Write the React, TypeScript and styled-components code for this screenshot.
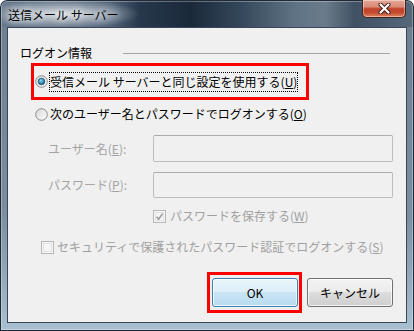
import styled, { createGlobalStyle } from "styled-components";

const GlobalStyle = createGlobalStyle`
  html, body {
    margin: 0;
    padding: 0;
    background: #fff;
  }
  body {
    font-family: "Noto Sans CJK JP", "Noto Sans", sans-serif;
    font-size: 12px;
  }
`;

const Window = styled.div`
  width: 414px;
  height: 331px;
  box-sizing: border-box;
  display: flex;
  flex-direction: column;
  border-radius: 7px 7px 0 0;
  overflow: hidden;
  background:
    radial-gradient(ellipse 78px 15px at 62px 14px, rgba(222, 227, 232, 0.95), rgba(222, 227, 232, 0)) top left / 100% 27px no-repeat,
    linear-gradient(
        to right,
        #66778a 0px,
        #53657a 110px,
        #27384c 140px,
        #1a293a 190px,
        #34475a 240px,
        #5f7385 295px,
        #6a7b8b 325px,
        #3f5163 355px,
        #56697b 414px
      )
      top left / 100% 27px no-repeat,
    linear-gradient(to bottom, #6c7d8e 0%, #7b8fa1 65%, #a9c0d2 100%);
  box-shadow:
    inset 0 0 0 1px #1f2a36,
    inset 0 0 0 2px rgba(255, 255, 255, 0.3);
`;

const TitleBar = styled.div`
  height: 27px;
  flex-shrink: 0;
  display: flex;
  align-items: flex-start;
  padding: 0 8px;
  box-sizing: border-box;
`;

const Title = styled.span`
  margin-top: 8px;
  line-height: 14px;
  color: #000;
  text-shadow: 0 0 6px #fff, 0 0 10px rgba(255, 255, 255, 0.9);
`;

const CloseButton = styled.div`
  margin-left: auto;
  width: 44px;
  height: 18px;
  box-sizing: border-box;
  border: 1px solid #47211a;
  border-top: none;
  border-radius: 0 0 5px 5px;
  background: linear-gradient(
    to bottom,
    #e5a696 0%,
    #d98a76 40%,
    #c2422b 52%,
    #c54b31 75%,
    #de8660 100%
  );
  box-shadow: inset 0 0 0 1px rgba(255, 255, 255, 0.4);
  display: flex;
  align-items: center;
  justify-content: center;
`;

const Client = styled.div`
  flex: 1;
  margin: 0 7px 8px;
  border: 1px solid #3a4653;
  background: #f0f0f0;
  display: flex;
  flex-direction: column;
  color: #000;
`;

const GroupHeader = styled.div`
  display: flex;
  align-items: center;
  height: 14px;
  margin-top: 18px;
  padding: 0 16px 0 12px;
`;

const GroupLabel = styled.span`
  line-height: 14px;
`;

const GroupLine = styled.div`
  flex: 1;
  margin-left: 31px;
  border-top: 1px solid #a6a6a6;
`;

const Highlight = styled.div`
  box-sizing: border-box;
  border: 3px solid #ff0000;
`;

const RadioHighlight = styled(Highlight)`
  width: 278px;
  height: 37px;
  margin: 3px 0 0 23px;
  padding-left: 1px;
  display: flex;
  align-items: center;
`;

const OptionRow = styled.div<{ $indent: number; $top: number; $gap: number }>`
  display: flex;
  align-items: center;
  height: 14px;
  margin: ${(p) => p.$top}px 0 0 ${(p) => p.$indent}px;
  gap: ${(p) => p.$gap}px;
`;

const OptionText = styled.span<{ $disabled?: boolean }>`
  line-height: 14px;
  white-space: nowrap;
  color: ${(p) => (p.$disabled ? "#a0a0a0" : "#000")};
`;

const FocusText = styled.span`
  margin-left: 1px;
  padding: 2px 0;
  border: 1px dotted #000;
  line-height: 14px;
  white-space: nowrap;
`;

const FieldRow = styled.div<{ $top: number }>`
  display: flex;
  align-items: center;
  margin: ${(p) => p.$top}px 0 0 40px;
`;

const FieldLabel = styled.span`
  width: 105px;
  color: #a3a3a3;
  line-height: 14px;
  white-space: nowrap;
`;

const TextBox = styled.div<{ $h: number }>`
  width: 240px;
  height: ${(p) => p.$h}px;
  box-sizing: border-box;
  border: 1px solid #bdbdbd;
  border-top-color: #acacac;
  border-radius: 2px;
  background: #f0f0f0;
`;

const ButtonRow = styled.div`
  display: flex;
  align-items: flex-start;
  margin-top: 18px;
  padding-left: 199px;
`;

const ButtonHighlight = styled(Highlight)`
  padding: 3px 1px 3px 2px;
`;

const Button = styled.button<{ $default?: boolean }>`
  width: 86px;
  height: 29px;
  padding: 0;
  box-sizing: border-box;
  border: 1px solid ${(p) => (p.$default ? "#3c7fb1" : "#707070")};
  border-radius: 3px;
  font-family: inherit;
  font-size: 12px;
  color: #000;
  background: ${(p) =>
    p.$default
      ? "linear-gradient(to bottom, #eaf5fb 0%, #dceef8 50%, #c9e5f4 50%, #b8dbee 100%)"
      : "linear-gradient(to bottom, #f2f2f2 0%, #ebebeb 50%, #dddddd 50%, #cfcfcf 100%)"};
  box-shadow: inset 0 0 0 1px rgba(255, 255, 255, 0.75);
`;

const CancelButton = styled(Button)`
  margin: 6px 0 0 5px;
`;

function Radio({ checked, disabled }: { checked?: boolean; disabled?: boolean }) {
  const ring = disabled ? "#c4c4c4" : "#8a8c8e";
  return (
    <svg width="13" height="13" viewBox="0 0 13 13">
      <defs>
        <linearGradient id="rfill" x1="0" y1="0" x2="1" y2="1">
          <stop offset="0" stopColor="#d6d6d6" />
          <stop offset="1" stopColor="#ffffff" />
        </linearGradient>
        <radialGradient id="rdot" cx="0.4" cy="0.35" r="0.7">
          <stop offset="0" stopColor="#8ad8f2" />
          <stop offset="0.6" stopColor="#2f89b4" />
          <stop offset="1" stopColor="#1a5675" />
        </radialGradient>
      </defs>
      <circle cx="6.5" cy="6.5" r="5.8" fill={disabled ? "#f4f4f4" : "url(#rfill)"} stroke={ring} />
      {disabled && <circle cx="6.5" cy="6.5" r="4" fill="none" stroke="#e0e0e0" />}
      {checked && <circle cx="6.5" cy="6.5" r="3.3" fill="url(#rdot)" stroke="#23536e" strokeWidth="0.8" />}
    </svg>
  );
}

function Check({ checked }: { checked?: boolean }) {
  return (
    <svg width="13" height="13" viewBox="0 0 13 13">
      <rect x="0.5" y="0.5" width="12" height="12" fill="#f6f6f6" stroke="#b6b6b6" />
      <rect x="2.5" y="2.5" width="8" height="8" fill="none" stroke="#e2e2e2" />
      {checked && (
        <path d="M3.5 6.8 L5.6 9.2 L9.6 3.6" fill="none" stroke="#9c9c9c" strokeWidth="1.6" />
      )}
    </svg>
  );
}

export default function App() {
  return (
    <>
      <GlobalStyle />
      <Window>
        <TitleBar>
          <Title>送信メール サーバー</Title>
          <CloseButton>
            <svg width="13" height="11" viewBox="0 0 13 11">
              <path d="M2.5 1.5 L10.5 9.5 M10.5 1.5 L2.5 9.5" stroke="#3b1a14" strokeWidth="4" strokeLinecap="round" />
              <path d="M2.5 1.5 L10.5 9.5 M10.5 1.5 L2.5 9.5" stroke="#ffffff" strokeWidth="2.2" strokeLinecap="round" />
            </svg>
          </CloseButton>
        </TitleBar>
        <Client>
          <GroupHeader>
            <GroupLabel>ログオン情報</GroupLabel>
            <GroupLine />
          </GroupHeader>
          <RadioHighlight>
            <Radio checked />
            <FocusText>
              受信メール サーバーと同じ設定を使用する(<u>U</u>)
            </FocusText>
          </RadioHighlight>
          <OptionRow $indent={27} $top={7} $gap={2}>
            <Radio />
            <OptionText>
              次のユーザー名とパスワードでログオンする(<u>O</u>)
            </OptionText>
          </OptionRow>
          <FieldRow $top={14}>
            <FieldLabel>
              ユーザー名(<u>E</u>):
            </FieldLabel>
            <TextBox $h={27} />
          </FieldRow>
          <FieldRow $top={10}>
            <FieldLabel>
              パスワード(<u>P</u>):
            </FieldLabel>
            <TextBox $h={26} />
          </FieldRow>
          <OptionRow $indent={145} $top={11} $gap={4}>
            <Check checked />
            <OptionText $disabled>
              パスワードを保存する(<u>W</u>)
            </OptionText>
          </OptionRow>
          <OptionRow $indent={33} $top={17} $gap={3}>
            <Check />
            <OptionText $disabled>
              セキュリティで保護されたパスワード認証でログオンする(<u>S</u>)
            </OptionText>
          </OptionRow>
          <ButtonRow>
            <ButtonHighlight>
              <Button $default>OK</Button>
            </ButtonHighlight>
            <CancelButton>キャンセル</CancelButton>
          </ButtonRow>
        </Client>
      </Window>
    </>
  );
}
